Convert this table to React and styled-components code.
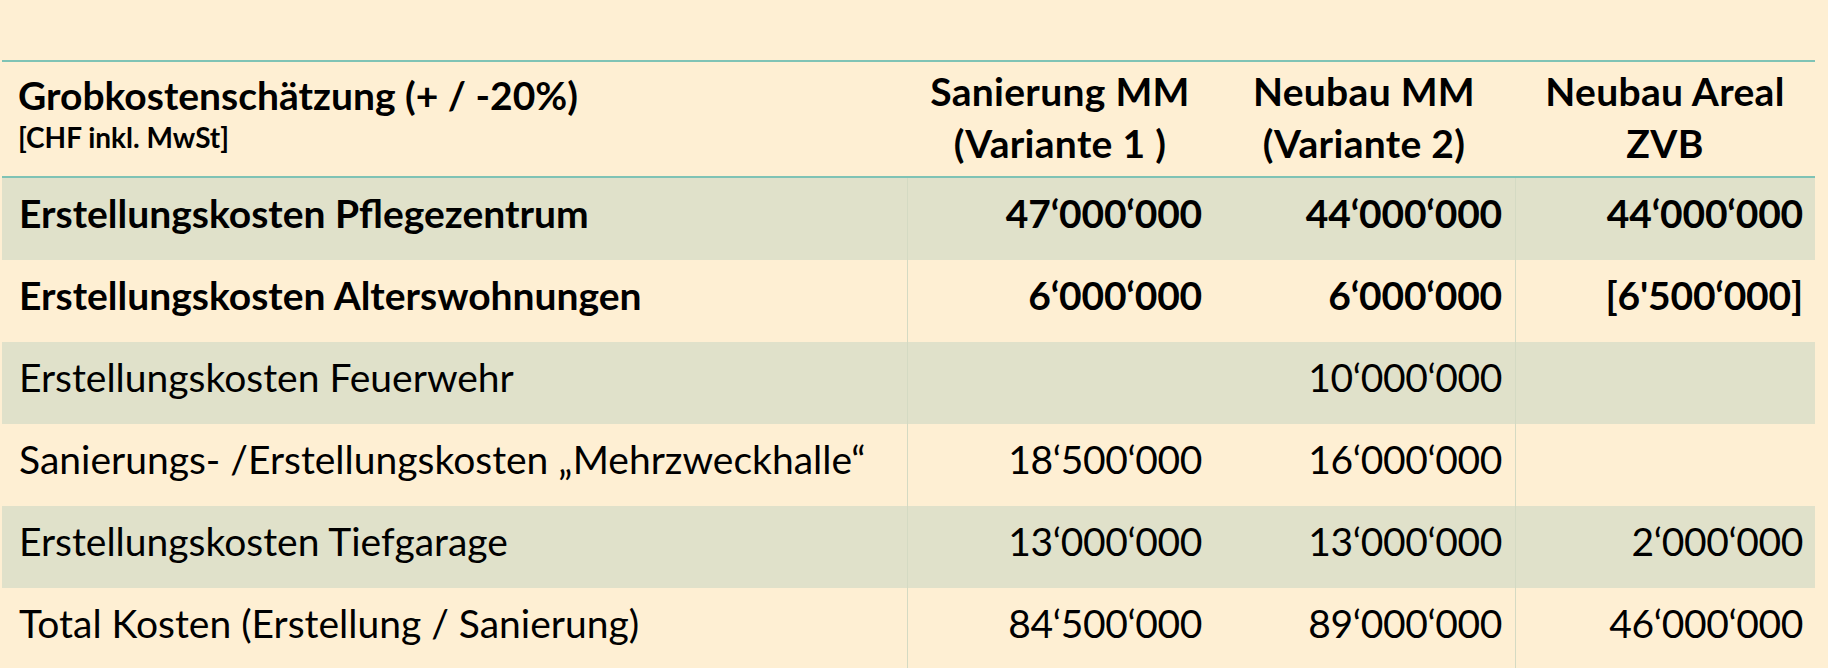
import React from "react";
import styled, { createGlobalStyle } from "styled-components";

const Global = createGlobalStyle`
  html, body { margin: 0; padding: 0; background: #feefd3; }
  body { font-family: Lato, "Open Sans", sans-serif; color: #000; }
`;

const Page = styled.div`
  width: 1828px;
  height: 668px;
  background: #feefd3;
  padding-top: 60px;
  box-sizing: border-box;
  overflow: hidden;
`;

const Table = styled.div`
  margin-left: 2px;
  width: 1813px;
  border-top: 2px solid #7fc3b5;
`;

const COLS = "905px 306px 302px 300px";

const HeaderRow = styled.div`
  display: grid;
  grid-template-columns: ${COLS};
  height: 116px;
  border-bottom: 2px solid #7fc3b5;
  box-sizing: border-box;
`;

const TitleCell = styled.div`
  padding: 8px 0 0 16px;
  display: flex;
  flex-direction: column;
`;

const Title = styled.div`
  font-weight: 700;
  font-size: 39px;
  line-height: 50px;
`;

const Sub = styled.div`
  font-weight: 700;
  font-size: 28px;
  line-height: 34px;
`;

const HeadCell = styled.div`
  display: flex;
  align-items: center;
  justify-content: center;
  text-align: center;
  font-weight: 700;
  font-size: 39px;
  letter-spacing: 0.3px;
  line-height: 52px;
  padding-bottom: 4px;
  white-space: nowrap;
`;

const Row = styled.div`
  display: grid;
  grid-template-columns: ${COLS};
  height: 82px;
  background: ${(p) => (p.$shaded ? "#e0e1ca" : "#feefd3")};
  font-weight: ${(p) => (p.$bold ? 700 : 400)};
  font-size: 39px;
`;

const LabelCell = styled.div`
  display: flex;
  align-items: center;
  padding: 0 0 13px 17px;
  white-space: nowrap;
`;

const NumCell = styled.div`
  display: flex;
  align-items: center;
  justify-content: flex-end;
  padding: 0 ${(p) => p.$pr}px 13px 0;
  letter-spacing: ${(p) => (p.$bold ? "-0.2px" : "-0.4px")};
  border-left: ${(p) => (p.$divider ? "1px solid #d4dac3" : "none")};
  white-space: nowrap;
`;

const headers = [
  ["Sanierung MM", "(Variante 1 )"],
  ["Neubau MM", "(Variante 2)"],
  ["Neubau Areal", "ZVB"],
];

const rows = [
  { label: "Erstellungskosten Pflegezentrum", bold: true, v: ["47‘000‘000", "44‘000‘000", "44‘000‘000"] },
  { label: "Erstellungskosten Alterswohnungen", bold: true, v: ["6‘000‘000", "6‘000‘000", "[6'500‘000]"] },
  { label: "Erstellungskosten Feuerwehr", v: ["", "10‘000‘000", ""] },
  { label: "Sanierungs- /Erstellungskosten „Mehrzweckhalle“", v: ["18‘500‘000", "16‘000‘000", ""] },
  { label: "Erstellungskosten Tiefgarage", v: ["13‘000‘000", "13‘000‘000", "2‘000‘000"] },
  { label: "Total Kosten (Erstellung / Sanierung)", v: ["84‘500‘000", "89‘000‘000", "46‘000‘000"] },
];

const pads = [11, 13, 12];
const dividers = [true, false, true];

export default function App() {
  return (
    <Page>
      <Global />
      <Table>
        <HeaderRow>
          <TitleCell>
            <Title>Grobkostenschätzung (+ / -20%)</Title>
            <Sub>[CHF inkl. MwSt]</Sub>
          </TitleCell>
          {headers.map((h, i) => (
            <HeadCell key={i}>
              {h[0]}
              <br />
              {h[1]}
            </HeadCell>
          ))}
        </HeaderRow>
        {rows.map((r, i) => (
          <Row key={i} $shaded={i % 2 === 0} $bold={r.bold}>
            <LabelCell>{r.label}</LabelCell>
            {r.v.map((v, j) => (
              <NumCell key={j} $pr={pads[j]} $divider={dividers[j]} $bold={r.bold}>
                {v}
              </NumCell>
            ))}
          </Row>
        ))}
      </Table>
    </Page>
  );
}
